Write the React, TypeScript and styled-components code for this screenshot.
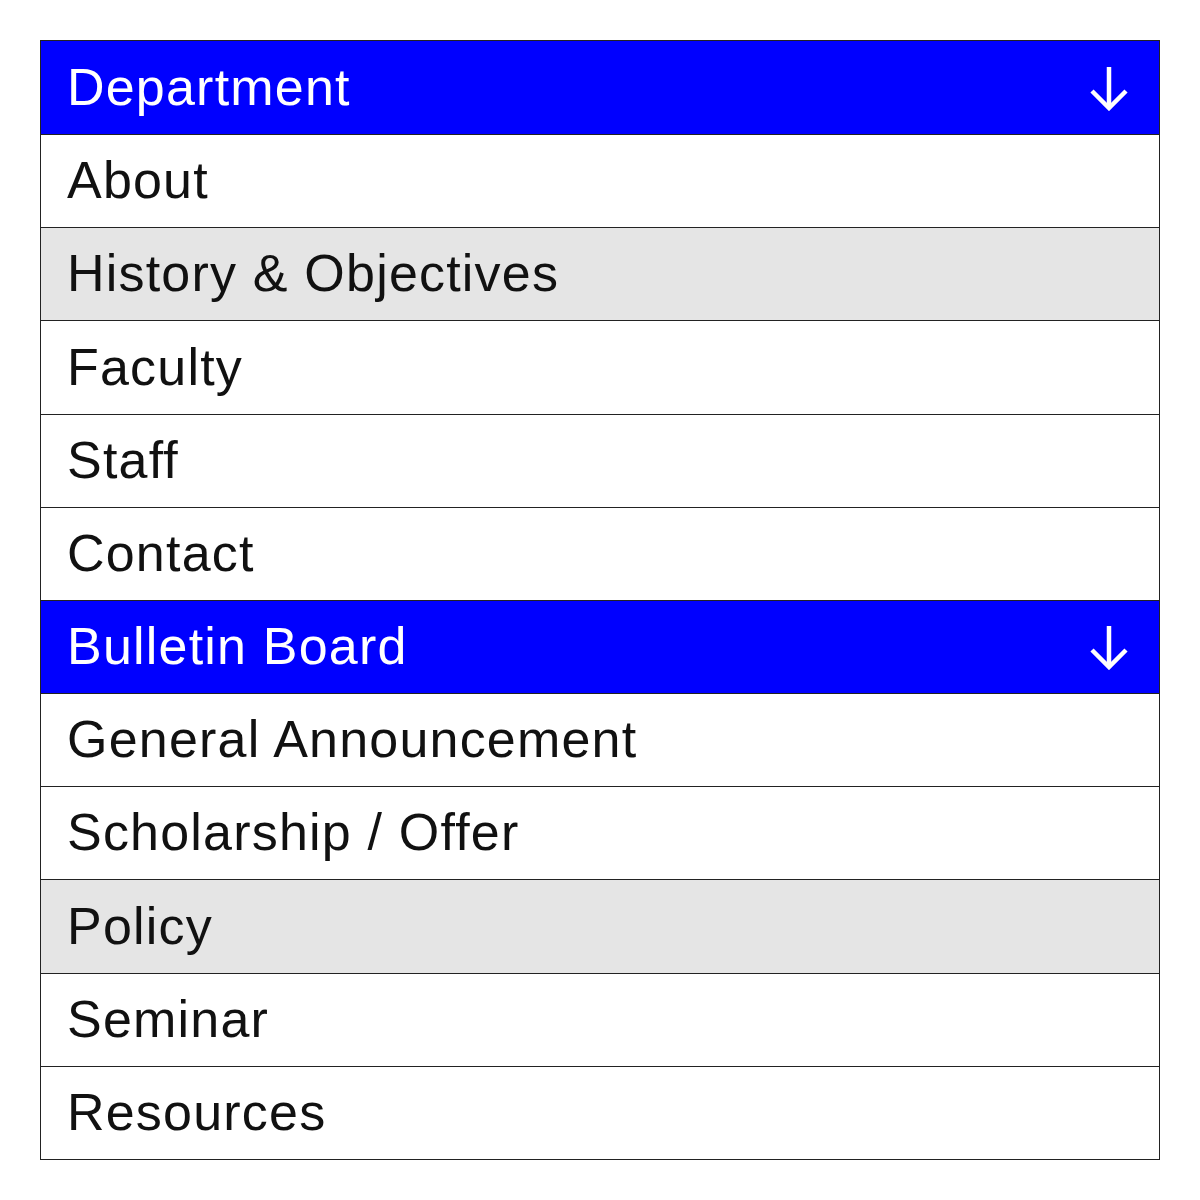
import React from 'react'
import styled, { createGlobalStyle } from 'styled-components'

const GlobalStyle = createGlobalStyle`
    html, body {
        margin: 0;
        padding: 0;
        background: #ffffff;
    }
    body {
        font-family: 'Liberation Sans', Arial, sans-serif;
    }
`

const Page = styled.div`
    width: 1200px;
    height: 1200px;
    padding: 40px;
    box-sizing: border-box;
`

const Menu = styled.nav`
    width: 1120px;
    height: 1120px;
    box-sizing: border-box;
    border: 1.5px solid #222;
    display: grid;
    grid-template-rows: repeat(12, 1fr);
`

type Variant = 'header' | 'plain' | 'active'

const Row = styled.div<{ $variant: Variant }>`
    display: flex;
    align-items: center;
    justify-content: space-between;
    padding: 0 30px 2px 26px;
    border-top: 1.5px solid #222;
    font-size: 52px;
    letter-spacing: 1.2px;
    background: ${(p) => (p.$variant === 'header' ? '#0000ff' : p.$variant === 'active' ? '#e5e5e5' : '#ffffff')};
    color: ${(p) => (p.$variant === 'header' ? '#ffffff' : '#111111')};

    &:first-child {
        border-top: none;
    }
`

const ArrowDown = () => (
    <svg width="40" height="48" viewBox="0 0 40 48" fill="none" stroke="#fff" strokeWidth="4.5">
        <path d="M20 4 V45" />
        <path d="M3 28 L20 45 L37 28" />
    </svg>
)

const items: { label: string; variant: Variant }[] = [
    { label: 'Department', variant: 'header' },
    { label: 'About', variant: 'plain' },
    { label: 'History & Objectives', variant: 'active' },
    { label: 'Faculty', variant: 'plain' },
    { label: 'Staff', variant: 'plain' },
    { label: 'Contact', variant: 'plain' },
    { label: 'Bulletin Board', variant: 'header' },
    { label: 'General Announcement', variant: 'plain' },
    { label: 'Scholarship / Offer', variant: 'plain' },
    { label: 'Policy', variant: 'active' },
    { label: 'Seminar', variant: 'plain' },
    { label: 'Resources', variant: 'plain' },
]

const App = () => (
    <Page>
        <GlobalStyle />
        <Menu>
            {items.map((item) => (
                <Row key={item.label} $variant={item.variant}>
                    <span>{item.label}</span>
                    {item.variant === 'header' && <ArrowDown />}
                </Row>
            ))}
        </Menu>
    </Page>
)

export default App
